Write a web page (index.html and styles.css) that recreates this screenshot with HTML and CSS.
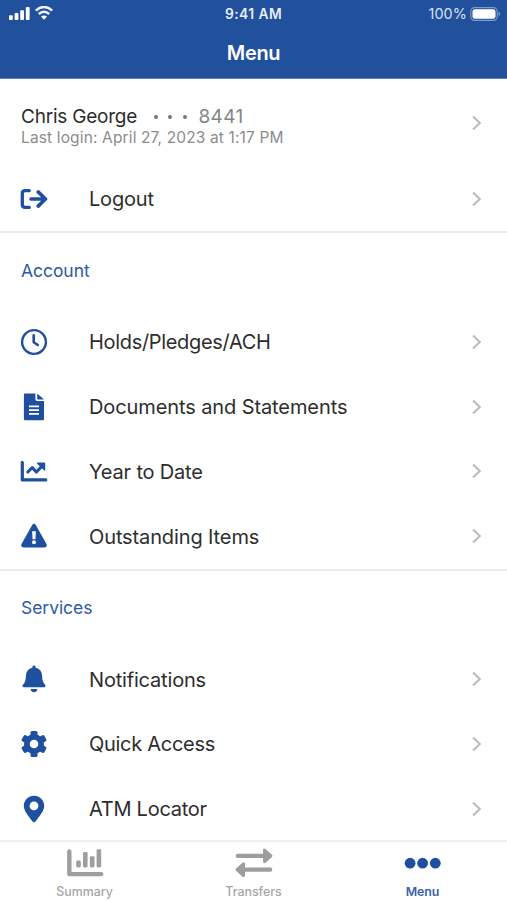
FILE: index.html
```html
<!DOCTYPE html>
<html lang="en">
<head>
<meta charset="utf-8">
<title>Menu</title>
<link rel="stylesheet" href="styles.css">
</head>
<body>
<svg class="defs" width="0" height="0"><symbol id="chev" viewBox="0 0 12 16"><path d="M2 1.5 8.8 8 2 14.5" fill="none" stroke="#bdbdbd" stroke-width="2.1"/></symbol></svg>
<div class="app">
  <header class="header">
    <div class="status">
      <div class="signal">
        <svg width="46" height="16" viewBox="0 0 46 16" fill="#fff"><rect x="1" y="9.3" width="3.8" height="4.7" rx="1"/><rect x="6.6" y="7" width="3.8" height="7" rx="1"/><rect x="12.2" y="4.2" width="3.8" height="9.8" rx="1"/><rect x="17.8" y="1" width="3.8" height="13" rx="1"/><g fill="none" stroke="#eef4ff" stroke-width="2.5"><path d="M27.8 4.6Q36-2.6 44.2 4.6"/><path d="M30.7 8Q36 3.4 41.3 8"/></g><path d="M33 10.6Q36 8.3 39 10.6L36 13.7Z"/></svg>
      </div>
      <div class="time">9:41 AM</div>
      <div class="battery"><span>100%</span>
        <svg width="31" height="14" viewBox="0 0 31 14"><rect x=".8" y=".6" width="26.4" height="12.8" rx="3.8" fill="none" stroke="#7f9cca" stroke-width="1.1"/><rect x="2.5" y="2.3" width="23" height="9.4" rx="2.2" fill="#fff"/><path d="M28.6 4.8Q30.2 5.4 30.2 7T28.6 9.2Z" fill="#7f9cca"/></svg>
      </div>
    </div>
    <h1 class="title">Menu</h1>
  </header>
  <main class="content">
    <div class="profile">
      <div class="who">
        <div class="name"><span class="person">Chris George</span><span class="dots"><i></i><i></i><i></i></span><span class="digits">8441</span></div>
        <div class="login">Last login: April 27, 2023 at 1:17 PM</div>
      </div>
      <svg class="chev"><use href="#chev"/></svg>
    </div>
    <div class="row">
      <svg class="icon" viewBox="0 0 28 28"><g fill="none" stroke="#1f4f9f" stroke-width="3.3" stroke-linecap="round" stroke-linejoin="round"><path d="M9.3 5.6H5.2Q2.3 5.6 2.3 8.5V19.5Q2.3 22.4 5.2 22.4H9.3"/><path d="M11 14H25.5M18.2 6.9 25.5 14 18.2 21.1" stroke-width="3.6"/></g></svg>
      <span class="label l-logout">Logout</span><svg class="chev"><use href="#chev"/></svg>
    </div>
    <section class="group">
      <h2 class="head">Account</h2>
      <div class="row">
        <svg class="icon" viewBox="0 0 28 28" fill="none" stroke="#1f4f9f"><circle cx="14" cy="14" r="11.9" stroke-width="2.4"/><path d="M13.7 7.2V14.2L17.8 17" stroke-width="2.6" stroke-linecap="round" stroke-linejoin="round"/></svg>
        <span class="label l-holds">Holds/Pledges/ACH</span><svg class="chev"><use href="#chev"/></svg>
      </div>
      <div class="row">
        <svg class="icon" viewBox="0 0 28 28"><path d="M5 .6H15.4V6.2Q15.4 7.9 17.1 7.9H24V26.2Q24 27.3 22.9 27.3H5Q3.9 27.3 3.9 26.2V1.7Q3.9.6 5 .6ZM17.2.6 24 6.5H17.9Q17.2 6.5 17.2 5.8Z" fill="#1f4f9f"/><path d="M9 13.3H19M9 17.1H19M9 20.9H19" stroke="#fff" stroke-width="1.7"/></svg>
        <span class="label l-docs">Documents and Statements</span><svg class="chev"><use href="#chev"/></svg>
      </div>
      <div class="row">
        <svg class="icon" viewBox="0 0 28 28"><g fill="none" stroke="#1f4f9f" stroke-width="3.1" stroke-linecap="round" stroke-linejoin="round"><path d="M2.3 5.4V22.9H25.8" stroke-width="3.2"/><path d="M7.8 15 12.2 10.7 16.4 15 22 9.2"/></g><path d="M17.5 5.5H24.2Q25.2 5.5 25.2 6.5V13.2Q24.7 14 24 13.2L17.1 6.8Q16.6 5.7 17.5 5.5Z" fill="#1f4f9f"/></svg>
        <span class="label l-year">Year to Date</span><svg class="chev"><use href="#chev"/></svg>
      </div>
      <div class="row">
        <svg class="icon" viewBox="0 0 28 28"><path d="M12.2 2.9Q14 .4 15.8 2.9L26.5 22Q27.6 25.1 24.7 25.4H3.3Q.4 25.1 1.5 22Z" fill="#1f4f9f"/><path d="M12.1 9.2H15.9L15.4 17.3H12.6Z" fill="#fff"/><circle cx="14" cy="20.3" r="2" fill="#fff"/></svg>
        <span class="label l-items">Outstanding Items</span><svg class="chev"><use href="#chev"/></svg>
      </div>
    </section>
    <section class="group">
      <h2 class="head">Services</h2>
      <div class="row">
        <svg class="icon" viewBox="0 0 28 28" fill="#1f4f9f"><path d="M12.4 2.7V2Q12.4.6 14 .6T15.6 2V2.7Q21.9 4.2 22.1 11Q22.2 16.8 24.6 19.3Q25.5 20.2 25.5 20.9Q25.5 22.2 24.1 22.2H3.9Q2.5 22.2 2.5 20.9Q2.5 20.2 3.4 19.3Q5.8 16.8 5.9 11Q6.1 4.2 12.4 2.7Z"/><path d="M10.6 24H17.4Q16.8 27.3 14 27.3T10.6 24Z"/></svg>
        <span class="label l-notif">Notifications</span><svg class="chev"><use href="#chev"/></svg>
      </div>
      <div class="row">
        <svg class="icon" viewBox="0 0 28 28"><g fill="#1f4f9f"><circle cx="14" cy="14" r="10"/><rect x="10.5" y="1" width="7" height="26" rx="1.5"/><rect x="10.5" y="1" width="7" height="26" rx="1.5" transform="rotate(60 14 14)"/><rect x="10.5" y="1" width="7" height="26" rx="1.5" transform="rotate(120 14 14)"/></g><circle cx="14" cy="14" r="4.3" fill="#fff"/></svg>
        <span class="label l-quick">Quick Access</span><svg class="chev"><use href="#chev"/></svg>
      </div>
      <div class="row">
        <svg class="icon" viewBox="0 0 28 28"><path fill-rule="evenodd" d="M14 .7C8.2.7 3.8 5.2 3.8 10.8C3.8 15.8 8 20.8 12.6 26.6Q14 28.2 15.4 26.6C20 20.8 24.2 15.8 24.2 10.8C24.2 5.2 19.8.7 14 .7ZM14 6.5A4.4 4.4 0 1 1 14 15.3A4.4 4.4 0 1 1 14 6.5Z" fill="#1f4f9f"/></svg>
        <span class="label l-atm">ATM Locator</span><svg class="chev"><use href="#chev"/></svg>
      </div>
    </section>
  </main>
  <nav class="tabs">
    <div class="tab">
      <svg width="38" height="30" viewBox="0 0 38 30"><path d="M3.3 3.4V26.1H35.2" fill="none" stroke="#9e9e9e" stroke-width="4.4" stroke-linecap="round" stroke-linejoin="round"/><g fill="#9e9e9e"><rect x="10.2" y="12.5" width="4.6" height="7" rx="1.4"/><rect x="17" y="3.9" width="4.6" height="15.6" rx="1.4"/><rect x="23.9" y="8.2" width="4.6" height="11.3" rx="1.4"/><rect x="30.6" y="1.2" width="4.6" height="18.3" rx="1.4"/></g></svg>
      <span class="t-sum">Summary</span>
    </div>
    <div class="tab">
      <svg width="38" height="30" viewBox="0 0 38 30" fill="#9e9e9e"><path d="M2.5 5.7H28V1.6Q28.7-.2 30.5.9L37 6.7Q37.9 7.8 37 8.9L30.5 14.8Q28.7 15.8 28 14V10H2.5Q.7 10 .7 7.9T2.5 5.7ZM35.5 19.5H10V15.5Q9.3 13.6 7.5 14.7L1 20.6Q.1 21.7 1 22.8L7.5 28.7Q9.3 29.7 10 28V23.8H35.5Q37.3 23.8 37.3 21.7T35.5 19.5Z"/></svg>
      <span class="t-tra">Transfers</span>
    </div>
    <div class="tab active">
      <svg width="38" height="30" viewBox="0 0 38 30" fill="#1f4f9f"><circle cx="6.1" cy="15.2" r="5.4"/><circle cx="18.6" cy="15.2" r="5.4"/><circle cx="31.3" cy="15.2" r="5.4"/></svg>
      <span class="t-menu">Menu</span>
    </div>
  </nav>
</div>
</body>
</html>
```
FILE: styles.css
```css
* { box-sizing: border-box; }
body { margin: 0; background: #fff; font-family: Inter, sans-serif; }
.defs { display: block; }
.app { width: 507px; height: 900px; display: flex; flex-direction: column; overflow: hidden; }
.header { height: 79px; flex: none; background: #21509c; color: #fff; border-bottom: 1px solid #5f82b9; }
.status { height: 27px; display: grid; grid-template-columns: 1fr 1fr 1fr; align-items: center; }
.signal { padding-left: 8px; height: 16px; }
.signal svg, .battery svg { display: block; }
.time { text-align: center; font-size: 13.8px; font-weight: 600; letter-spacing: 0.45px; padding-top: 1px; color: #e8eefa; }
.battery { display: flex; justify-content: flex-end; align-items: center; gap: 3px; padding-right: 6px; font-size: 14.4px; letter-spacing: 0.1px; color: #d5e1f5; }
.title { margin: 0; text-align: center; font-size: 20px; line-height: 24px; font-weight: 600; letter-spacing: -0.35px; padding-top: 14px; }
.content { flex: none; height: 761px; overflow: hidden; }
.profile { height: 87.4px; padding: 26px 24px 0 21px; display: flex; justify-content: space-between; }
.profile .chev { margin-top: 10px; }
.name { display: flex; align-items: center; height: 23px; font-size: 19px; color: #2d2d2d; }
.person { letter-spacing: -0.22px; }
.dots { display: flex; gap: 10.2px; margin: 1px 12px 0 17px; }
.dots i { width: 4px; height: 4px; border-radius: 50%; background: #777; }
.digits { color: #858585; letter-spacing: 0.35px; }
.login { font-size: 15.5px; line-height: 20px; letter-spacing: 0.14px; color: #8c8c8c; white-space: nowrap; }
.row { height: 64.8px; display: flex; align-items: center; padding: 0 24px 0 20px; }
.icon { width: 28px; height: 28px; flex: none; margin-right: 41px; }
.label { flex: 1; padding-top: 1px; font-size: 20px; line-height: 26px; color: #2d2d2d; white-space: nowrap; }
.l-logout { letter-spacing: -0.2px; }
.l-holds { letter-spacing: -0.32px; }
.l-docs { letter-spacing: -0.1px; }
.l-year { letter-spacing: -0.18px; }
.l-items { letter-spacing: -0.12px; }
.l-notif { letter-spacing: -0.18px; }
.l-quick { letter-spacing: -0.28px; }
.l-atm { letter-spacing: -0.27px; }
.chev { width: 12px; height: 16px; flex: none; }
.group { border-top: 2px solid #ebebeb; }
.head { margin: 0; height: 76.3px; padding: 24px 0 0 21px; font-size: 17.5px; line-height: 28px; font-weight: 400; letter-spacing: -0.05px; color: #2c5aa8; }
.group + .group .head { height: 76px; padding-top: 23.7px; }
.tabs { flex: 1; border-top: 2px solid #efefef; background: #fff; display: grid; grid-template-columns: 1fr 1fr 1fr; }
.tab { display: flex; flex-direction: column; align-items: center; padding-top: 6px; color: #a6a6a6; font-size: 12.4px; font-weight: 500; }
.tab svg { display: block; flex: none; }
.tab span { line-height: 16px; margin-top: 6px; }
.active { color: #3860a8; font-weight: 600; }
.t-menu { letter-spacing: -0.15px; }
```
